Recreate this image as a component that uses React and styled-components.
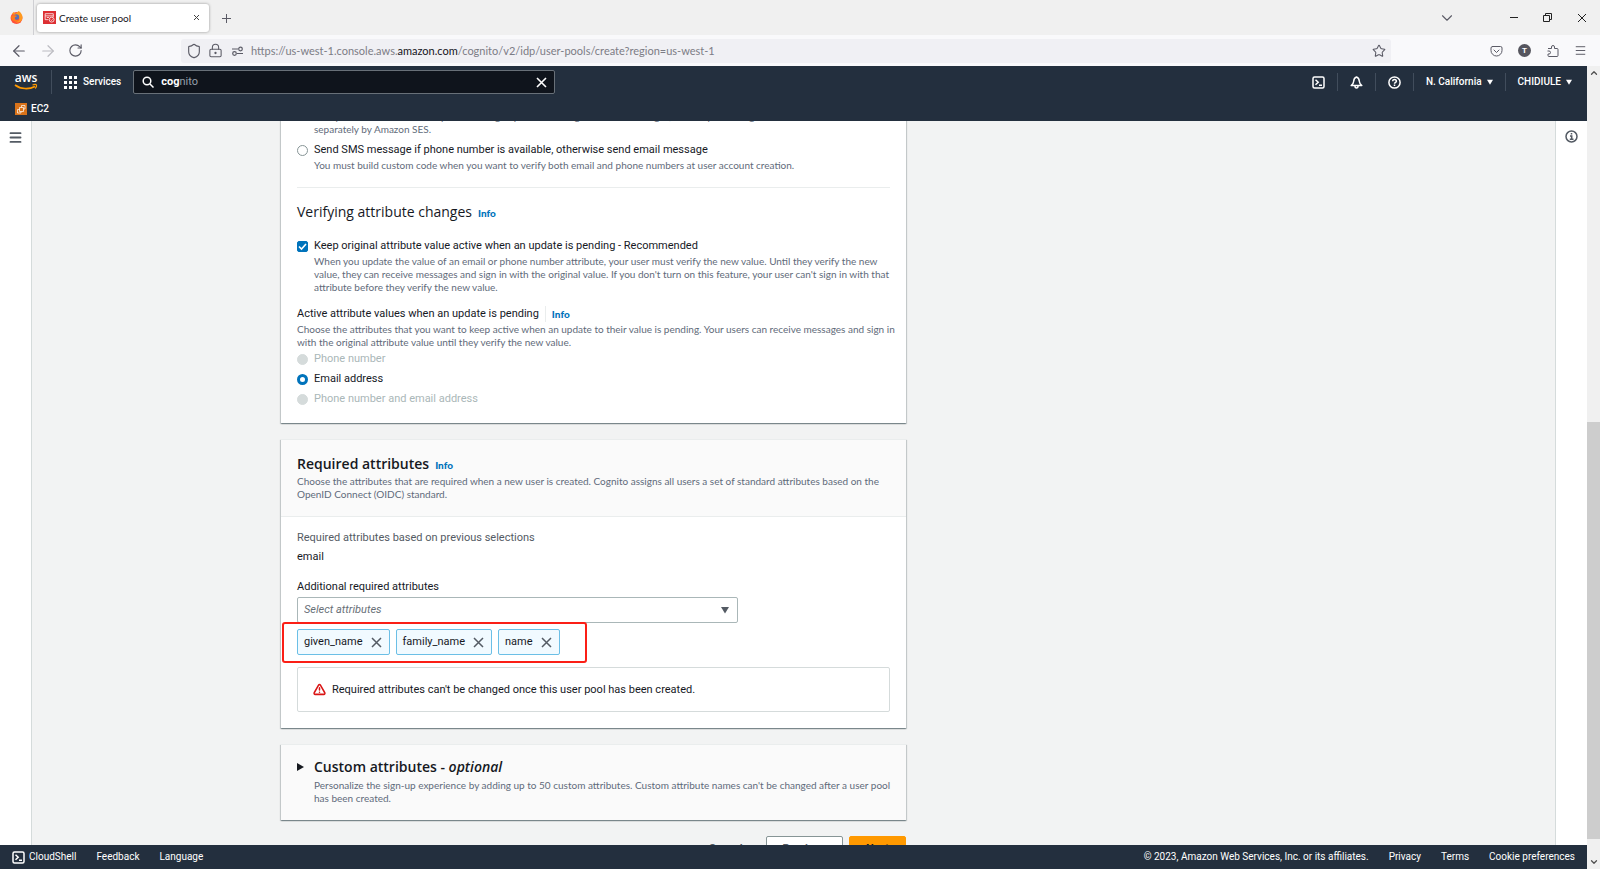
import React from 'react';
import styled, {createGlobalStyle, css} from "styled-components";
import {
    ArrowLeft, ArrowRight, RotateCw, Shield, LockKeyhole, Star, Menu, ChevronDown, ChevronUp, TriangleAlert
} from "lucide-react";

const BODY_FONT = `Roboto, "Open Sans", sans-serif`;
const TITLE_FONT = `"Open Sans", "Noto Sans", sans-serif`;
const SMALL_FONT = `Lato, "Open Sans", sans-serif`;

const GlobalStyle = createGlobalStyle`
    * {
        box-sizing: border-box;
    }

    body {
        margin: 0;
        font-family: ${BODY_FONT};
        font-size: 11px;
        line-height: 16px;
        color: #16191f;
        background: #f2f3f3;
    }

    button, input, select {
        font: inherit;
        color: inherit;
    }

    p, h1, h2, h3 {
        margin: 0;
    }

    svg {
        display: block;
        flex: none;
    }
`
const Window = styled.div`
    display: flex;
    flex-direction: column;
    height: 100vh;
    overflow: hidden;
`
const IconButton = styled.button`
    display: flex;
    align-items: center;
    justify-content: center;
    padding: 0;
    border: 0;
    background: none;
    color: ${({$color}) => $color || '#5b5b66'};
`

/* browser tabs */
const TabBar = styled.div`
    display: flex;
    align-items: center;
    flex: none;
    height: 35px;
    background: #f0f0f0;
    font-family: ${SMALL_FONT};
`
const FirefoxView = styled.div`
    display: flex;
    align-items: center;
    justify-content: center;
    width: 34px;
    height: 35px;
    border-right: 1px solid #cfcfd3;
`
const Tab = styled.div`
    display: flex;
    align-items: center;
    width: 172px;
    height: 28px;
    margin: 0 12px 0 3px;
    padding: 0 9px 0 6px;
    gap: 3px;
    border-radius: 3px;
    background: #fff;
    box-shadow: 0 0 3px rgba(0, 0, 0, 0.4);
`
const TabTitle = styled.span`
    flex: 1;
    font-size: 10px;
    color: #15141a;
`
const WindowButtons = styled.div`
    display: flex;
    align-items: center;
    gap: 25px;
    margin-left: auto;
    padding-right: 13px;
`
const TabList = styled.div`
    margin-right: 28px;
`

/* browser toolbar */
const Toolbar = styled.div`
    display: flex;
    align-items: center;
    flex: none;
    height: 31px;
    padding: 0 13px 0 10px;
    background: #f9f9fb;
`
const NavButtons = styled.div`
    display: flex;
    flex: none;
    gap: 11px;
    width: 171px;
`
const AddressBar = styled.div`
    display: flex;
    align-items: center;
    flex: 1;
    min-width: 0;
    height: 24px;
    padding: 0 5px 0 5px;
    gap: 6px;
    border-radius: 3px;
    background: #f0f0f4;
    color: #5b5b66;
`
const AddressField = styled.div`
    position: relative;
    flex: 1;
    height: 24px;
`
const AddressInput = styled.input`
    width: 100%;
    height: 24px;
    padding: 0;
    border: 0;
    outline: 0;
    background: none;
`
const AddressText = styled.div`
    position: absolute;
    inset: 0;
    font-family: ${SMALL_FONT};
    font-size: 11px;
    line-height: 24px;
    color: #7c7c85;
    pointer-events: none;

    b {
        font-weight: 400;
        color: #15141a;
    }
`
const ToolbarEnd = styled.div`
    display: flex;
    align-items: center;
    gap: 15px;
    margin-left: 99px;
`
const Avatar = styled.span`
    display: flex;
    align-items: center;
    justify-content: center;
    width: 13px;
    height: 13px;
    border-radius: 50%;
    background: #55555e;
    color: #fff;
    font-size: 8px;
    font-weight: 700;
`

/* page */
const Viewport = styled.div`
    display: flex;
    flex: 1;
    min-height: 0;
`
const Console = styled.div`
    display: flex;
    flex-direction: column;
    flex: 1;
    min-width: 0;
`
const Scrollbar = styled.div`
    display: flex;
    flex-direction: column;
    align-items: center;
    width: 13px;
    padding: 2px 0;
    background: #f0f0f0;
    color: #505050;
`
const Track = styled.div`
    display: grid;
    grid-template-rows: 344fr 417fr 18fr;
    flex: 1;
    width: 100%;
`
const Thumb = styled.div`
    grid-row: 2;
    background: #cdcdcd;
`

/* console header */
const Header = styled.header`
    flex: none;
    height: 55px;
    background: #232f3e;
    color: #fff;
    font-size: 10px;
`
const HeaderRow = styled.div`
    display: flex;
    align-items: center;
    height: 32px;
    padding: 0 15px 0 14px;
`
const HeaderButton = styled.button`
    display: flex;
    align-items: center;
    gap: ${({$gap}) => $gap || 5}px;
    height: 18px;
    padding: 0 12px;
    border: 0;
    border-right: ${({$last}) => $last ? 0 : '1px solid #414d5c'};
    background: none;
    color: #fff;
    font-weight: 500;

    &:last-child {
        padding-right: 0;
    }
`
const LogoLink = styled.a`
    display: flex;
    padding-right: 13px;
    border-right: 1px solid #414d5c;
`
const SearchBox = styled.div`
    display: flex;
    align-items: center;
    flex: 0 1 422px;
    height: 24px;
    padding: 0 7px 0 8px;
    border: 1px solid #687078;
    border-radius: 2px;
    background: #0f141c;
    font-size: 11px;
    color: #95a0ab;

    svg {
        color: #fff;
    }
`
const SearchInput = styled.input`
    field-sizing: content;
    margin-left: 7px;
    padding: 0;
    border: 0;
    outline: 0;
    background: none;
    color: #fff;
    font-weight: 700;
`
const HeaderEnd = styled.div`
    display: flex;
    align-items: center;
    margin-left: auto;
`
const Favorites = styled.nav`
    display: flex;
    padding: 3px 15px;
`
const FavoriteLink = styled.a`
    display: flex;
    align-items: center;
    gap: 4px;
    color: #fff;
    font-weight: 500;
    text-decoration: none;
`

/* console body */
const Body = styled.div`
    display: flex;
    flex: 1;
    min-height: 0;
`
const Rail = styled.aside`
    display: flex;
    justify-content: center;
    align-items: flex-start;
    flex: none;
    width: 32px;
    padding-top: 9px;
    background: #fff;
    border: 0 solid #d5dbdb;
    border-width: ${({$right}) => $right ? '0 0 0 1px' : '0 1px 0 0'};
`
const Main = styled.main`
    flex: 1;
    min-width: 0;
    overflow: hidden;
    display: grid;
    grid-template-columns: minmax(0, 625px);
    align-content: start;
    padding-left: 249px;
`
const Scrolled = styled.div`
    display: flex;
    flex-direction: column;
    gap: 16px;
    margin-top: -13px;
`
const Card = styled.section`
    border-top: 1px solid #eaeded;
    background: ${({$muted}) => $muted ? '#fafafa' : '#fff'};
    box-shadow: 0 1px 1px rgba(0, 28, 36, 0.3), 1px 1px 1px rgba(0, 28, 36, 0.15), -1px 1px 1px rgba(0, 28, 36, 0.15);
`
const CardBody = styled.div`
    padding: ${({$top}) => $top || 0}px 16px 16px;
`
const CardHeader = styled.div`
    padding: 14px 16px 15px;
    border-bottom: 1px solid #eaeded;
    background: #fafafa;
`
const Title = styled.h2`
    display: flex;
    align-items: baseline;
    gap: 6px;
    font-family: ${TITLE_FONT};
    font-size: 14px;
    line-height: 20px;
    font-weight: ${({$light}) => $light ? 400 : 600};
`
const InfoLink = styled.a`
    font-family: ${SMALL_FONT};
    font-size: 10px;
    line-height: 16px;
    font-weight: 900;
    color: #0073bb;
    text-decoration: none;
`
const Hint = styled.p`
    margin-top: 1px;
    font-family: ${SMALL_FONT};
    font-size: 10px;
    line-height: 13px;
    white-space: nowrap;
    color: #5f6b7a;
`
const Label = styled.label`
    font-weight: 400;
`
const Divider = styled.hr`
    margin: 15px 0 14px;
    border: 0;
    border-top: 1px solid #eaeded;
`
const Choice = styled.div`
    display: grid;
    grid-template-columns: 11px 1fr;
    column-gap: 6px;
    align-items: center;
    margin-top: ${({$mt}) => $mt || 0}px;
    color: ${({$disabled}) => $disabled ? '#aab7b8' : 'inherit'};

    ${Hint} {
        grid-column: 2;
    }
`
const box = css`
    appearance: none;
    width: 11px;
    height: 11px;
    margin: 0;
    border: 1px solid #879596;
    background: #fff;
`
const Radio = styled.input.attrs({type: 'radio'})`
    ${box};
    border-radius: 50%;

    &:checked {
        border: 3px solid #0073bb;
    }

    &:disabled {
        border-color: #d5dbdb;
        background: #d5dbdb;
    }
`
const CheckWrap = styled.span`
    display: grid;

    > * {
        grid-area: 1 / 1;
    }

    svg {
        pointer-events: none;
    }
`
const Checkbox = styled.input.attrs({type: 'checkbox'})`
    ${box};
    border-radius: 2px;

    &:checked {
        border-color: #0073bb;
        background: #0073bb;
    }
`
const LabelRow = styled.div`
    display: flex;
    align-items: center;
    gap: 6px;
    margin-top: 12px;

    ${InfoLink} {
        padding-left: 6px;
        border-left: 1px solid #eaeded;
    }
`
const Muted = styled.p`
    color: #545b64;
`
const Value = styled.p`
    margin: 3px 0 14px;
`
const SelectWrap = styled.div`
    display: grid;
    align-items: center;
    width: calc(75% - 4px);
    margin-top: 2px;

    > * {
        grid-area: 1 / 1;
    }

    svg {
        justify-self: end;
        margin-right: 9px;
        pointer-events: none;
    }
`
const Select = styled.select`
    appearance: none;
    width: 100%;
    height: 26px;
    padding: 0 6px;
    border: 1px solid #aab7b8;
    border-radius: 2px;
    background: #fff;
    color: #687078;
    font-style: italic;
`
const TokenArea = styled.div`
    position: relative;
    display: flex;
    gap: 6px;
    margin-top: 6px;
`
const Highlight = styled.div`
    position: absolute;
    top: -7px;
    left: -15px;
    width: 305px;
    height: 41px;
    border: 2px solid #fb1f16;
    border-radius: 3px;
    pointer-events: none;
`
const Token = styled.span`
    display: flex;
    align-items: center;
    gap: 8px;
    height: 26px;
    padding: 0 7px 0 6px;
    border: 1px solid #6bbfe6;
    border-radius: 2px;
    background: #f1faff;
`
const Alert = styled.div`
    display: flex;
    align-items: center;
    gap: 6px;
    height: 45px;
    margin-top: 12px;
    padding: 0 15px;
    border: 1px solid #d5dbdb;
    border-radius: 2px;
`
const Expander = styled.div`
    display: grid;
    grid-template-columns: 11px 1fr;
    column-gap: 6px;
    align-items: center;
    padding: 12px 16px 15px;

    ${Hint} {
        grid-column: 2;
        margin-top: 2px;
    }
`
const Actions = styled.div`
    display: flex;
    justify-content: flex-end;
    gap: 6px;
`
const Button = styled.button`
    height: 26px;
    padding: 0 16px;
    border: 1px solid ${({$kind}) => ({normal: '#879596', primary: '#ff9900'}[$kind] || 'transparent')};
    border-radius: 2px;
    background: ${({$kind}) => ({normal: '#fff', primary: '#ff9900'}[$kind] || 'none')};
    color: ${({$kind}) => $kind === 'primary' ? '#16191f' : '#545b64'};
    font-weight: 700;
`

/* console footer */
const Footer = styled.footer`
    display: flex;
    align-items: center;
    flex: none;
    gap: 20px;
    height: 24px;
    padding: 0 12px;
    background: #232f3e;
    color: #fff;
    font-size: 10px;

    a {
        display: flex;
        align-items: center;
        gap: 4px;
        color: inherit;
        text-decoration: none;
    }
`
const Copyright = styled.span`
    margin-left: auto;
`

const Firefox = () => (
    <svg width="13" height="13" viewBox="0 0 24 24">
        <circle cx="12" cy="13" r="11" fill="#ff4f3a"/>
        <path d="M4 6 6 2l4 3 6-5c3 2 8 7 7 13-1 8-10 11-15 6 6 2 10-1 9-6-1-4-6-6-13-7Z" fill="#ff9a1f"/>
        <circle cx="12" cy="11" r="5" fill="#5a6fb5"/>
        <path d="M2 11c1-3 4-4 7-3l4 1-4 3c-1 4 3 6 7 4-3 5-14 4-14-5Z" fill="#ff7a1c"/>
    </svg>
);

const CognitoIcon = () => (
    <svg width="13" height="13" viewBox="0 0 24 24">
        <rect width="24" height="24" fill="#dd2f33"/>
        <path d="M10 16H4V5h15v6M4 9h15M7 12h4" fill="none" stroke="#fff" strokeWidth="1.4"/>
        <circle cx="16" cy="16" r="4.5" fill="none" stroke="#fff" strokeWidth="1.4"/>
        <path d="m14 16 1.5 1.5L18 15" fill="none" stroke="#fff" strokeWidth="1.3"/>
    </svg>
);

const Cross = ({size = 11, width = 1.5}) => (
    <svg width={size} height={size} viewBox={`0 0 ${size} ${size}`} fill="none" stroke="currentColor" strokeWidth={width}>
        <path d={`M1 1 ${size - 1} ${size - 1}M${size - 1} 1 1 ${size - 1}`}/>
    </svg>
);

const PlusIcon = () => (
    <svg width="10" height="10" viewBox="0 0 10 10" fill="none" stroke="currentColor">
        <path d="M5.500 1v9M1 5.500h9"/>
    </svg>
);

const MinusIcon = () => (
    <svg width="9" height="9" viewBox="0 0 9 9" fill="none" stroke="currentColor">
        <path d="M1 4.500h8"/>
    </svg>
);

const Restore = () => (
    <svg width="9" height="9" viewBox="0 0 9 9" fill="none" stroke="currentColor">
        <path d="M.5 2.500h6v6h-6zM2.500 2.500v-2h6v6h-2"/>
    </svg>
);

const Permissions = () => (
    <svg width="16" height="12" viewBox="0 0 16 12" fill="none" stroke="currentColor" strokeWidth="1.2">
        <path d="M3 4h6M8 8.500h6"/>
        <circle cx="11.500" cy="4" r="1.800"/>
        <circle cx="5.500" cy="8.500" r="1.800"/>
    </svg>
);

const Pocket = () => (
    <svg width="13" height="12" viewBox="0 0 13 12" fill="none" stroke="#5b5b66" strokeLinecap="round">
        <path d="M2.500 1.500h8q1.500 0 1.500 1.500v2.500a5.500 5.500 0 0 1-11 0V3q0-1.500 1.500-1.500ZM4 5l2.500 2.500L9 5"/>
    </svg>
);

const Extension = () => (
    <svg width="13" height="14" viewBox="0 0 13 14" fill="none" stroke="#5b5b66" strokeLinejoin="round">
        <path d="M2 4.500h3.500V3a1.500 1.500 0 0 1 3 0v1.500H11q1 0 1 1v6q0 1-1 1H3q-1 0-1-1V10h1a1.500 1.500 0 0 0 0-3H1.500"/>
    </svg>
);

const AwsLogo = () => (
    <svg width="24" height="24" viewBox="0 0 24 24">
        <text x="12" y="12" textAnchor="middle" fill="#fff" fontSize="12" fontWeight="600" fontFamily={TITLE_FONT}>aws</text>
        <path d="M1 15c6 4.500 14 4.500 20 1.500" fill="none" stroke="#ff9900" strokeWidth="1.600"/>
        <path d="M18.500 15c2-.8 3.500-.8 4 0 .3 1-.4 2.500-1.300 3.500" fill="none" stroke="#ff9900" strokeWidth="1.200"/>
    </svg>
);

const Waffle = () => (
    <svg width="13" height="13" viewBox="0 0 13 13" fill="#fff">
        {[0, 5, 10].map(y => [0, 5, 10].map(x => <rect key={`${x}-${y}`} x={x} y={y} width="3" height="3"/>))}
    </svg>
);

const SearchIcon = () => (
    <svg width="12" height="12" viewBox="0 0 12 12" fill="none" stroke="currentColor" strokeWidth="1.5">
        <circle cx="5" cy="5" r="3.800"/>
        <path d="m8 8 3.500 3.500"/>
    </svg>
);

const Shell = () => (
    <svg width="13" height="13" viewBox="0 0 13 13" fill="none" stroke="currentColor" strokeWidth="1.5">
        <rect x="1" y="1" width="11" height="11" rx="1.500"/>
        <path d="m3.500 3.800 2.700 2.500-2.700 2.500M7 9.300h3"/>
    </svg>
);

const BellIcon = () => (
    <svg width="13" height="13" viewBox="0 0 13 13" fill="none" stroke="currentColor" strokeWidth="1.5" strokeLinejoin="round">
        <path d="M6.500 1C4.500 1.800 3.800 3.200 3.700 5.200 3.600 7 3 8 1.200 9.500h10.600C10 8 9.400 7 9.300 5.200 9.200 3.200 8.500 1.800 6.500 1Z"/>
        <path d="M5 10c0 1.200.6 2 1.500 2S8 11.200 8 10"/>
    </svg>
);

const Help = () => (
    <svg width="13" height="13" viewBox="0 0 13 13" fill="none" stroke="currentColor" strokeWidth="1.5">
        <circle cx="6.500" cy="6.500" r="5.600"/>
        <path d="M4.700 5.200c0-2.300 3.700-2.200 3.700 0C8.400 6.400 6.500 6.500 6.500 7.800M6.500 8.600v1.400"/>
    </svg>
);

const InfoIcon = () => (
    <svg width="13" height="13" viewBox="0 0 13 13" fill="none" stroke="currentColor" strokeWidth="1.5">
        <circle cx="6.500" cy="6.500" r="5.500"/>
        <path d="M6.500 3v1.500M5 6h1.700v3.200M4.800 9.300h3.700"/>
    </svg>
);

const Ec2Icon = () => (
    <svg width="12" height="12" viewBox="0 0 24 24">
        <rect width="24" height="24" fill="#d9731a"/>
        <path d="M9 9h8v8H9zM9 13H5v7h7v-3M13 9V5h7v7h-3" fill="none" stroke="#fff" strokeWidth="1.4"/>
    </svg>
);

const Caret = ({color = '#fff', size = 6}) => (
    <svg width={size} height={size} viewBox="0 0 8 8" fill={color}>
        <path d="M0 1h8L4 7.500z"/>
    </svg>
);

const tokens = ['given_name', 'family_name', 'name'];

const Browser = () => (
    <>
        <TabBar>
            <FirefoxView><Firefox/></FirefoxView>
            <Tab>
                <CognitoIcon/>
                <TabTitle>Create user pool</TabTitle>
                <IconButton $color="#444" aria-label="Close tab"><Cross size={7} width={1}/></IconButton>
            </Tab>
            <IconButton aria-label="New tab"><PlusIcon/></IconButton>
            <WindowButtons>
                <TabList>
                    <IconButton aria-label="List all tabs"><ChevronDown size={18} strokeWidth={1.5}/></IconButton>
                </TabList>
                <IconButton $color="#222" aria-label="Minimize"><MinusIcon/></IconButton>
                <IconButton $color="#222" aria-label="Restore"><Restore/></IconButton>
                <IconButton $color="#222" aria-label="Close window"><Cross size={10} width={1}/></IconButton>
            </WindowButtons>
        </TabBar>
        <Toolbar>
            <NavButtons>
                <IconButton aria-label="Back"><ArrowLeft size={18} strokeWidth={1.6}/></IconButton>
                <IconButton $color="#bcbcc2" aria-label="Forward"><ArrowRight size={18} strokeWidth={1.6}/></IconButton>
                <IconButton aria-label="Reload"><RotateCw size={15} strokeWidth={1.8}/></IconButton>
            </NavButtons>
            <AddressBar>
                <Shield size={16} strokeWidth={1.7}/>
                <LockKeyhole size={15} strokeWidth={1.7}/>
                <Permissions/>
                <AddressField>
                    <AddressInput aria-label="Address"/>
                    <AddressText>
                        https://us-west-1.console.aws.<b>amazon.com</b>/cognito/v2/idp/user-pools/create?region=us-west-1
                    </AddressText>
                </AddressField>
                <Star size={14} strokeWidth={1.8}/>
            </AddressBar>
            <ToolbarEnd>
                <Pocket/>
                <Avatar>T</Avatar>
                <Extension/>
                <IconButton aria-label="Menu"><Menu size={13} strokeWidth={1.8}/></IconButton>
            </ToolbarEnd>
        </Toolbar>
    </>
);

const ConsoleHeader = () => (
    <Header>
        <HeaderRow>
            <LogoLink href="#home" aria-label="AWS home"><AwsLogo/></LogoLink>
            <HeaderButton $last $gap={6}><Waffle/>Services</HeaderButton>
            <SearchBox>
                <SearchIcon/>
                <SearchInput aria-label="Search" defaultValue="cog"/>
                <span>nito</span>
                <HeaderEnd>
                    <IconButton $color="#fff" aria-label="Clear search"><Cross size={11} width={1.6}/></IconButton>
                </HeaderEnd>
            </SearchBox>
            <HeaderEnd>
                <HeaderButton aria-label="CloudShell"><Shell/></HeaderButton>
                <HeaderButton aria-label="Notifications"><BellIcon/></HeaderButton>
                <HeaderButton aria-label="Help"><Help/></HeaderButton>
                <HeaderButton>N. California <Caret/></HeaderButton>
                <HeaderButton $last>CHIDIULE <Caret/></HeaderButton>
            </HeaderEnd>
        </HeaderRow>
        <Favorites>
            <FavoriteLink href="#ec2"><Ec2Icon/>EC2</FavoriteLink>
        </Favorites>
    </Header>
);

const VerificationCard = () => (
    <Card>
        <CardBody>
            <Choice>
                <Hint>
                    Verify email addresses when your users sign up. Amazon Cognito sends messages, and they are charged<br/>
                    separately by Amazon SES.
                </Hint>
            </Choice>
            <Choice $mt={6}>
                <Radio id="sms" name="message"/>
                <Label htmlFor="sms">Send SMS message if phone number is available, otherwise send email message</Label>
                <Hint>You must build custom code when you want to verify both email and phone numbers at user account creation.</Hint>
            </Choice>
            <Divider/>
            <Title $light>Verifying attribute changes <InfoLink href="#verifying">Info</InfoLink></Title>
            <Choice $mt={16}>
                <CheckWrap>
                    <Checkbox id="keep" defaultChecked/>
                    <svg width="11" height="11" viewBox="0 0 11 11" fill="none" stroke="#fff" strokeWidth="1.600">
                        <path d="M2 5.500l2.500 2.500L9 3"/>
                    </svg>
                </CheckWrap>
                <Label htmlFor="keep">Keep original attribute value active when an update is pending - Recommended</Label>
                <Hint>
                    When you update the value of an email or phone number attribute, your user must verify the new value. Until they verify the new<br/>
                    value, they can receive messages and sign in with the original value. If you don't turn on this feature, your user can't sign in with that<br/>
                    attribute before they verify the new value.
                </Hint>
            </Choice>
            <LabelRow>
                <span>Active attribute values when an update is pending</span>
                <InfoLink href="#active">Info</InfoLink>
            </LabelRow>
            <Hint>
                Choose the attributes that you want to keep active when an update to their value is pending. Your users can receive messages and sign in<br/>
                with the original attribute value until they verify the new value.
            </Hint>
            <Choice $mt={2} $disabled>
                <Radio id="phone" name="active" disabled/>
                <Label htmlFor="phone">Phone number</Label>
            </Choice>
            <Choice $mt={4}>
                <Radio id="email" name="active" defaultChecked/>
                <Label htmlFor="email">Email address</Label>
            </Choice>
            <Choice $mt={4} $disabled>
                <Radio id="both" name="active" disabled/>
                <Label htmlFor="both">Phone number and email address</Label>
            </Choice>
        </CardBody>
    </Card>
);

const RequiredCard = () => (
    <Card>
        <CardHeader>
            <Title>Required attributes <InfoLink href="#required">Info</InfoLink></Title>
            <Hint>
                Choose the attributes that are required when a new user is created. Cognito assigns all users a set of standard attributes based on the<br/>
                OpenID Connect (OIDC) standard.
            </Hint>
        </CardHeader>
        <CardBody $top={13}>
            <Muted>Required attributes based on previous selections</Muted>
            <Value>email</Value>
            <Label htmlFor="attributes">Additional required attributes</Label>
            <SelectWrap>
                <Select id="attributes">
                    <option>Select attributes</option>
                </Select>
                <Caret color="#545b64" size={8}/>
            </SelectWrap>
            <TokenArea>
                {tokens.map(name => (
                    <Token key={name}>
                        {name}
                        <IconButton $color="#545b64" aria-label={`Remove ${name}`}><Cross/></IconButton>
                    </Token>
                ))}
                <Highlight/>
            </TokenArea>
            <Alert>
                <TriangleAlert size={13} color="#d91515" strokeWidth={2.8}/>
                Required attributes can't be changed once this user pool has been created.
            </Alert>
        </CardBody>
    </Card>
);

const CustomCard = () => (
    <Card $muted>
        <Expander>
            <IconButton $color="#16191f" aria-label="Expand custom attributes">
                <svg width="11" height="8" viewBox="0 0 11 8" fill="currentColor"><path d="M0 0l7 4-7 4z"/></svg>
            </IconButton>
            <Title><span>Custom attributes - <i>optional</i></span></Title>
            <Hint>
                Personalize the sign-up experience by adding up to 50 custom attributes. Custom attribute names can't be changed after a user pool<br/>
                has been created.
            </Hint>
        </Expander>
    </Card>
);

const App = () => (
    <Window>
        <GlobalStyle/>
        <Browser/>
        <Viewport>
            <Console>
                <ConsoleHeader/>
                <Body>
                    <Rail>
                        <IconButton $color="#545b64" aria-label="Open navigation"><Menu size={15} strokeWidth={3}/></IconButton>
                    </Rail>
                    <Main>
                        <Scrolled>
                            <VerificationCard/>
                            <RequiredCard/>
                            <CustomCard/>
                            <Actions>
                                <Button>Cancel</Button>
                                <Button $kind="normal">Previous</Button>
                                <Button $kind="primary">Next</Button>
                            </Actions>
                        </Scrolled>
                    </Main>
                    <Rail $right>
                        <IconButton $color="#545b64" aria-label="Open info panel"><InfoIcon/></IconButton>
                    </Rail>
                </Body>
                <Footer>
                    <a href="#cloudshell"><Shell/>CloudShell</a>
                    <a href="#feedback">Feedback</a>
                    <a href="#language">Language</a>
                    <Copyright>© 2023, Amazon Web Services, Inc. or its affiliates.</Copyright>
                    <a href="#privacy">Privacy</a>
                    <a href="#terms">Terms</a>
                    <a href="#cookies">Cookie preferences</a>
                </Footer>
            </Console>
            <Scrollbar>
                <ChevronUp size={10} strokeWidth={3}/>
                <Track><Thumb/></Track>
                <ChevronDown size={10} strokeWidth={3}/>
            </Scrollbar>
        </Viewport>
    </Window>
);

export default App;
